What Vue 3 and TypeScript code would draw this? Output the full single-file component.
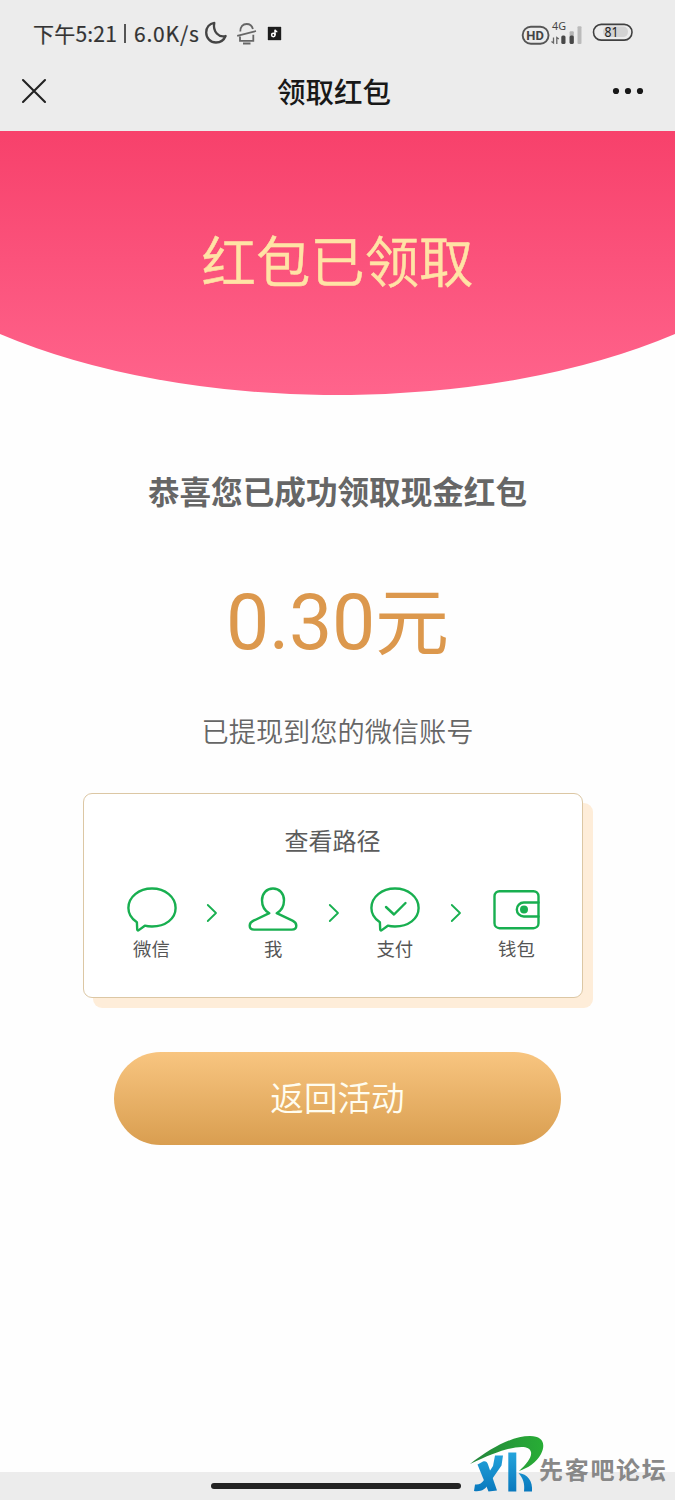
<script setup lang="ts">
interface Step {
  id: 'chat' | 'person' | 'pay' | 'wallet'
  label: string
}

const steps: Step[] = [
  { id: 'chat', label: '微信' },
  { id: 'person', label: '我' },
  { id: 'pay', label: '支付' },
  { id: 'wallet', label: '钱包' },
]
</script>

<template>
  <div class="screen">
    <header class="top">
      <div class="status">
        <span class="clock">下午5:21</span>
        <span class="bar"></span>
        <span class="speed">6.0K/s</span>
        <svg class="moon" width="24" height="24" viewBox="0 0 24 24">
          <path d="M10.3 1.8C5.500 2.700 2.200 6.500 2.200 11.500c0 5.600 4.300 10 9.800 10 4.300 0 8-2.600 9.600-6.500C15 16.900 8.500 10.800 10.300 1.800z" />
        </svg>
        <svg class="bell" width="22" height="24" viewBox="0 0 22 24">
          <path d="M4.300 10.500C4.300 5.600 6.900 3 10.600 3c3.200 0 5.500 1.800 6.300 5M1.200 14.800 20 10M4 15.500v4.300h13.300v-6M7 22.500h7.500" />
        </svg>
        <svg class="note" width="15" height="15" viewBox="0 0 15 15">
          <rect width="15" height="15" fill="#1d1d1d" />
          <circle cx="6.300" cy="9" r="1.700" />
          <path d="M8 9.200V3.700c.2 1.300 1 2 2.300 2.100" />
        </svg>
        <svg class="signals" width="112" height="30" viewBox="0 0 112 30">
          <rect x="1.700" y="8.800" width="25.800" height="17" rx="8.200" fill="none" stroke="#555" stroke-width="1.900" />
          <text x="5.300" y="21.700" class="hd" textLength="17.500" lengthAdjust="spacingAndGlyphs">HD</text>
          <text x="31" y="11.500" class="g4" textLength="14" lengthAdjust="spacingAndGlyphs">4G</text>
          <path d="M32.500 19.500V25l-2-1.600M35.800 26v-6.500l2 1.500" fill="none" stroke="#666" stroke-width="1.300" />
          <rect x="40.300" y="17.500" width="4.200" height="8.500" rx="1.500" fill="#484848" />
          <rect x="48.600" y="13.300" width="4.200" height="12" rx="1" fill="#b5b5b5" />
          <rect x="48.600" y="17.500" width="4.200" height="8.500" rx="1.500" fill="#484848" />
          <rect x="56.500" y="8.300" width="4" height="17.700" rx="1" fill="#bbb" />
          <rect x="82" y="8.600" width="25" height="10.500" rx="5" fill="#d3d3d3" />
          <rect x="72.500" y="6.400" width="38.500" height="15.700" rx="7.800" fill="none" stroke="#404040" stroke-width="1.600" />
          <text x="83.500" y="19" class="pct" textLength="14" lengthAdjust="spacingAndGlyphs">81</text>
        </svg>
      </div>
      <nav class="nav">
        <svg class="close" width="26" height="26" viewBox="0 0 26 26"><path d="m2 2 22 22M24 2 2 24" /></svg>
        <h1>领取红包</h1>
        <svg class="more" width="32" height="8" viewBox="0 0 32 8">
          <circle cx="4" cy="4" r="3.100" /><circle cx="16" cy="4" r="3.100" /><circle cx="28" cy="4" r="3.100" />
        </svg>
      </nav>
    </header>

    <section class="hero">
      <svg class="arch" width="675" height="264" viewBox="0 0 675 264">
        <defs>
          <linearGradient id="pink" x1="0" y1="0" x2="0" y2="1">
            <stop offset="0" stop-color="#f7416b" />
            <stop offset="1" stop-color="#ff648c" />
          </linearGradient>
        </defs>
        <path d="M0 0H675V203A500 233 0 0 1 0 203Z" fill="url(#pink)" />
      </svg>
      <h2>红包已领取</h2>
    </section>

    <main class="content">
      <p class="congrats">恭喜您已成功领取现金红包</p>
      <p class="amount"><span class="number">0.30</span><span class="unit">元</span></p>
      <p class="desc">已提现到您的微信账号</p>

      <section class="card">
        <h3>查看路径</h3>
        <div class="steps">
          <template v-for="(step, i) in steps" :key="step.id">
            <svg v-if="i > 0" class="arrow" width="12" height="20" viewBox="0 0 12 20"><path d="m1.800 2 8.200 8-8.200 8" /></svg>
            <div class="step">
              <svg class="icon" width="52" height="48" viewBox="0 0 52 48">
                <path
                  v-if="step.id === 'chat' || step.id === 'pay'"
                  d="M26 3.500C12.800 3.500 2.400 12.100 2.400 23c0 6 3.500 11 8.500 14.300l.3 7.200c.1 1 .8 1.200 1.600.6l6-4.400c2.300.6 4.700.8 7.200.8 13.200 0 23.600-7.600 23.600-18.500S39.200 3.500 26 3.500z"
                />
                <path v-if="step.id === 'pay'" d="m17 22 8 7.500L36.500 18" />
                <path
                  v-if="step.id === 'person'"
                  d="M26 3.500c-6.500 0-11 5-11 11.700 0 5.300 2.800 10.500 7.300 13L6.500 35.700c-2.600 1.200-3.800 2.800-3.800 5 0 2.500 1.700 3.900 4.500 3.900h37.600c2.800 0 4.500-1.400 4.500-3.900 0-2.200-1.200-3.800-3.800-5l-15.800-7.500c4.500-2.500 7.300-7.700 7.300-13C37 8.500 32.500 3.500 26 3.500z"
                />
                <template v-if="step.id === 'wallet'">
                  <rect x="4.500" y="6.200" width="44" height="37" rx="5" />
                  <path d="M48.500 17.500H33.800a7 7 0 0 0 0 14h14.700" />
                  <circle cx="34" cy="24.500" r="2.800" class="dot" />
                </template>
              </svg>
              <span>{{ step.label }}</span>
            </div>
          </template>
        </div>
      </section>

      <button type="button" class="back">返回活动</button>
    </main>

    <footer class="bottom"><span class="handle"></span></footer>

    <div class="watermark">
      <svg width="76" height="60" viewBox="0 0 76 60">
        <defs>
          <linearGradient id="blue" gradientUnits="userSpaceOnUse" x1="0" y1="16" x2="0" y2="56">
            <stop offset="0" stop-color="#25a5dc" />
            <stop offset="1" stop-color="#0878bd" />
          </linearGradient>
          <linearGradient id="green" x1="0" y1="0" x2="1" y2="0">
            <stop offset="0" stop-color="#23843c" />
            <stop offset="1" stop-color="#28ad35" />
          </linearGradient>
        </defs>
        <path d="M1 28C22 12 43 0 61 0c13 0 16 8 11 18-5 9-13 14-22 17 8-7 13-14 12-19C60 6 36 11 1 28z" fill="url(#green)" />
        <path d="M8.500 28.500 14 25.500c2.500-.8 4 .3 5 3L28 54.500l-8.500 1z" fill="url(#blue)" />
        <path d="M26 19.500h8l-1.500 10-12.500 18c-3.500 6-8 8.500-15 7.500L6 48.500c4 .5 6.500-1 9-4.500l9-14z" fill="url(#blue)" />
        <path d="M39.300 16.500h8V55.500h-8z" fill="url(#blue)" />
        <path d="M49.500 37c9 1 14.500 8 13.500 18.500h-8c1-8-1-13.500-5.500-18.500z" fill="url(#blue)" />
      </svg>
      <span>先客吧论坛</span>
    </div>
  </div>
</template>

<style>
html,
body {
  margin: 0;
  background: #fff;
}
</style>

<style scoped>
.screen {
  position: relative;
  display: flex;
  flex-direction: column;
  width: 675px;
  height: 1500px;
  overflow: hidden;
  background: #fefefe;
  font-family: 'Noto Sans CJK SC', sans-serif;
  color: #666;
}
h1,
h2,
h3,
p {
  margin: 0;
  font-weight: 400;
}
.top {
  height: 131px;
  flex: none;
  background: #ececec;
}
.status {
  display: flex;
  align-items: center;
  height: 66px;
  padding-left: 33px;
  font-size: 21px;
  font-weight: 400;
  color: #333;
  line-height: 30px;
}
.clock,
.speed {
  margin-top: -1px;
  -webkit-text-stroke: 0.2px #333;
}
.clock {
  width: 84px;
  letter-spacing: 0.2px;
  white-space: nowrap;
}
.bar {
  width: 2px;
  height: 19px;
  margin: 0 8px 0 7px;
  background: #555;
}
.speed {
  width: 66px;
  letter-spacing: 0.8px;
}
.moon {
  margin-left: 4px;
  fill: none;
  stroke: #444;
  stroke-width: 2.3;
  stroke-linejoin: round;
}
.bell {
  margin-left: 8px;
  fill: none;
  stroke: #666;
  stroke-width: 1.8;
}
.note {
  margin-left: 9px;
  fill: none;
  stroke: #fff;
  stroke-width: 1.5;
}
.signals {
  margin-left: 239px;
  fill: #444;
}
.hd {
  font: 700 12px Roboto, sans-serif;
}
.g4 {
  font: 400 10.5px 'Noto Sans', sans-serif;
}
.pct {
  font: 400 13.5px 'Noto Sans', sans-serif;
  fill: #222;
}
.nav {
  display: grid;
  grid-template-columns: 100px 1fr 100px;
  align-items: center;
  height: 50px;
}
.close {
  margin-left: 21px;
  fill: none;
  stroke: #222;
  stroke-width: 2.1;
  stroke-linecap: round;
}
.nav h1 {
  margin-left: -7px;
  text-align: center;
  font-size: 28.5px;
  font-weight: 500;
  line-height: 50px;
  color: #181818;
}
.more {
  margin-left: 37px;
  fill: #181818;
}
.hero {
  position: relative;
  flex: none;
  height: 264px;
}
.arch {
  display: block;
  position: absolute;
  inset: 0;
}
.hero h2 {
  position: relative;
  padding-top: 88px;
  text-align: center;
  font-size: 54.4px;
  font-weight: 350;
  line-height: 80px;
  color: #ffe3a5;
  -webkit-text-stroke: 0.5px #ffe3a5;
}
.content {
  display: flex;
  flex: 1;
  flex-direction: column;
  align-items: center;
}
.congrats {
  margin-top: 71px;
  font-size: 31.6px;
  font-weight: 700;
  line-height: 48px;
}
.amount {
  display: flex;
  align-items: baseline;
  margin-top: 48px;
  height: 110px;
  line-height: 110px;
  color: #dc984d;
}
.number {
  font-family: Roboto, sans-serif;
  font-size: 77px;
  letter-spacing: -0.3px;
}
.unit {
  font-size: 74px;
}
.desc {
  margin-top: 38px;
  font-size: 27.2px;
  font-weight: 350;
  line-height: 40px;
}
.card {
  box-sizing: border-box;
  width: 500px;
  height: 205px;
  margin: 43px 10px 0 0;
  padding: 28px 39px 0 42px;
  border: 1px solid #dcc7a4;
  border-radius: 9px;
  background: #fff;
  box-shadow: 10px 10px 0 #feedd9;
}
.card h3 {
  margin-right: 3px;
  text-align: center;
  font-size: 24px;
  line-height: 36px;
  color: #5c5c5c;
}
.steps {
  display: flex;
  justify-content: space-between;
  margin-top: 27px;
}
.step {
  display: flex;
  flex-direction: column;
  align-items: center;
  width: 52px;
}
.icon,
.arrow {
  display: block;
  fill: none;
  stroke: #18af50;
  stroke-width: 2.4;
  stroke-linejoin: round;
  stroke-linecap: round;
}
.arrow {
  margin-top: 18px;
  stroke-width: 1.8;
}
.icon .dot {
  fill: #18af50;
}
.step span {
  margin-top: 1px;
  font-size: 18.4px;
  line-height: 28px;
  white-space: nowrap;
  color: #555;
}
.back {
  width: 447px;
  height: 93px;
  margin-top: 54px;
  padding: 0 0 5px;
  border: 0;
  border-radius: 47px;
  background: linear-gradient(#f8c580, #d99e50);
  font-family: inherit;
  font-size: 33.6px;
  font-weight: 350;
  color: #fffdf0;
}
.bottom {
  display: flex;
  flex: none;
  justify-content: center;
  height: 28px;
  background: #ececec;
}
.handle {
  width: 250px;
  height: 6px;
  margin: 11px 4px 0 0;
  border-radius: 3px;
  background: #222;
}
.watermark {
  position: absolute;
  left: 469px;
  top: 1436px;
  display: flex;
}
.watermark span {
  margin: 15px 0 0 -6px;
  font-size: 24px;
  font-weight: 700;
  line-height: 36px;
  letter-spacing: 1.7px;
  white-space: nowrap;
  color: #888;
}
</style>
